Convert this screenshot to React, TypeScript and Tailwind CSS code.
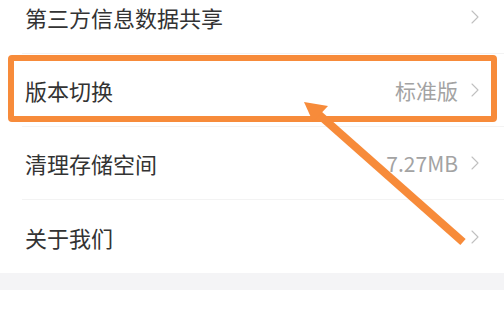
import { ChevronRight } from 'lucide-react'

const rows = [
  { label: '第三方信息数据共享', value: '' },
  { label: '版本切换', value: '标准版' },
  { label: '清理存储空间', value: '7.27MB' },
  { label: '关于我们', value: '' },
]

function Row({ label, value, last }: { label: string; value: string; last: boolean }) {
  return (
    <div className="pl-[22px]">
      <div
        className={
          last
            ? 'flex h-[73px] items-center pl-[3px] pr-[17px]'
            : 'flex h-[73px] items-center border-b border-[#f3f3f3] pl-[3px] pr-[17px]'
        }
      >
        <span className="flex-1 text-[22px] leading-none text-[#333]">{label}</span>
        {value && <span className="mr-[5px] text-[21px] leading-none text-[#a3a3a3]">{value}</span>}
        <ChevronRight className="h-6 w-6 text-[#c0c0c0]" strokeWidth={1.1} />
      </div>
    </div>
  )
}

export default function App() {
  return (
    <div
      className="relative h-[315px] w-[504px] overflow-hidden bg-white"
      style={{ fontFamily: '"Noto Sans CJK SC", "Noto Sans", sans-serif' }}
    >
      <div className="-mt-[19px] flex flex-col">
        {rows.map((r, i) => (
          <Row key={r.label} {...r} last={i === rows.length - 1} />
        ))}
      </div>
      <div className="h-[17px] bg-[#f4f4f6]" />

      {/* highlight box */}
      <div className="absolute left-[8px] top-[55px] h-[67px] w-[489px] rounded-[4px] border-[6px] border-[#f78b3a]" />

      {/* arrow */}
      <svg className="absolute inset-0" width="504" height="315" viewBox="0 0 504 315">
        <line x1="463" y1="242" x2="316" y2="112" stroke="#f78b3a" strokeWidth="8" />
        <polygon points="304,102 328,106 313,122" fill="#f78b3a" />
      </svg>
    </div>
  )
}
